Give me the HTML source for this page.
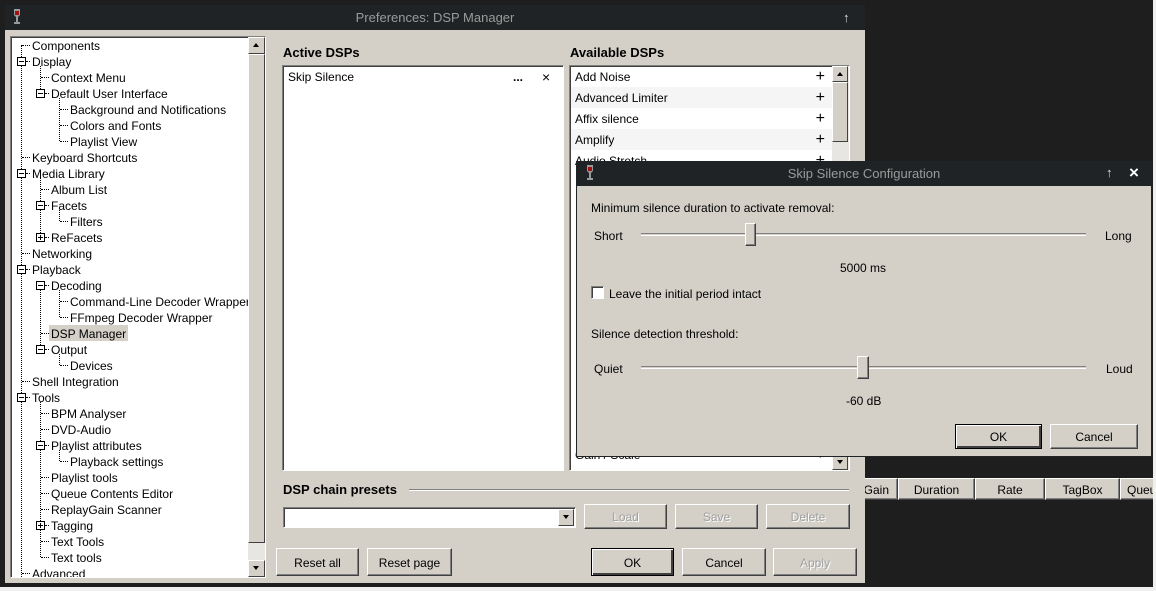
<!DOCTYPE html>
<html><head><meta charset="utf-8"><style>
*{box-sizing:border-box;margin:0;padding:0}
html,body{width:1156px;height:591px;overflow:hidden}
body{background:#1e1e1e;position:relative;font-family:"Liberation Sans","DejaVu Sans",sans-serif;font-size:12px;color:#000}
.a{position:absolute}
.t{margin-top:1px}
.win{background:#d4d0c8}
.tb{background:#202325;color:#9a9a9a;font-size:13px;text-align:center}
.btn{position:absolute;background:#d4d0c8;border:1px solid;border-color:#fff #404040 #404040 #fff;box-shadow:inset -1px -1px 0 #808080;text-align:center;font-size:12px;padding-top:1px}
.dis{color:#a0a0a0;text-shadow:1px 1px 0 #fff}
.sunk{position:absolute;background:#fff;border:1px solid;border-color:#808080 #fff #fff #808080;box-shadow:inset 1px 1px 0 #404040}
.r{position:absolute;height:16px;line-height:18px;white-space:nowrap;color:#000}
.h{position:absolute;height:1px;border-top:1px dotted #000}
.v{position:absolute;width:1px;border-left:1px dotted #000}
.ex{position:absolute;width:9px;height:9px;border:1px solid #000;background:#fff}
.ex:before{content:"";position:absolute;left:1px;top:3px;width:5px;height:1px;background:#000}
.ex.p:after{content:"";position:absolute;left:3px;top:1px;width:1px;height:5px;background:#000}
.sb{position:absolute;background:#e8e6e2}
.arr{position:absolute;width:16px;height:16px;background:#d4d0c8;border:1px solid;border-color:#fff #404040 #404040 #fff}
.up:after,.dn:after{content:"";position:absolute;left:4px;border-left:3px solid transparent;border-right:3px solid transparent}
.up:after{top:5px;border-bottom:4px solid #000}
.dn:after{top:5px;border-top:4px solid #000}
.li{position:absolute;height:21px;line-height:23px;padding-left:4px;white-space:nowrap}
.pl{position:absolute;right:8px;top:0;font-size:16px;line-height:21px}
</style></head><body>
<div class="a" style="left:865px;top:478px;width:291px;height:22px;background:#d4d0c8"></div>
<div class="btn" style="left:858px;top:478px;width:40px;height:22px;line-height:20px;text-align:right;padding-right:8px">Gain</div>
<div class="btn" style="left:898px;top:478px;width:77px;height:22px;line-height:20px">Duration</div>
<div class="btn" style="left:975px;top:478px;width:70px;height:22px;line-height:20px">Rate</div>
<div class="btn" style="left:1045px;top:478px;width:75px;height:22px;line-height:20px">TagBox</div>
<div class="btn" style="left:1120px;top:478px;width:36px;height:22px;line-height:20px;text-align:left;padding-left:6px;overflow:hidden">Queu</div>
<div class="a" style="left:0;top:587px;width:1156px;height:4px;background:#f0f0f0"></div>
<div class="a" style="left:1153px;top:0;width:3px;height:587px;background:#f0f0f0"></div>

<div class="a win" style="left:5px;top:5px;width:860px;height:578px"></div>
<div class="a tb" style="left:5px;top:5px;width:860px;height:25px;line-height:26px">Preferences: DSP Manager</div>
<div class="a" style="left:14px;top:9px;width:6px;height:16px"><svg width="6" height="16"><path d="M0 0h6v6l-2 2v5h2v2h-6v-2h2v-5l-2-2z" fill="#999"/><rect x="1" y="2" width="4" height="4" fill="#a01010"/></svg></div>
<div class="a" style="left:843px;top:10px;color:#ddd;font-size:13px;font-weight:bold">↑</div>

<div class="sunk" style="left:10px;top:36px;width:256px;height:542px"></div>
<div class="a" style="left:11px;top:37px;width:237px;height:540px;overflow:hidden">
<div class="a" style="left:-11px;top:-37px;width:260px;height:577px">
<div class="v" style="left:21px;top:45px;height:540px"></div>
<div class="v" style="left:40px;top:66px;height:27px"></div>
<div class="v" style="left:40px;top:178px;height:59px"></div>
<div class="v" style="left:40px;top:290px;height:59px"></div>
<div class="v" style="left:40px;top:402px;height:155px"></div>
<div class="v" style="left:59px;top:98px;height:43px"></div>
<div class="v" style="left:59px;top:210px;height:11px"></div>
<div class="v" style="left:59px;top:290px;height:27px"></div>
<div class="v" style="left:59px;top:354px;height:11px"></div>
<div class="v" style="left:59px;top:450px;height:11px"></div>
<div class="h" style="left:22px;top:45px;width:8px"></div><div class="r" style="left:32px;top:37px">Components</div>
<div class="ex" style="left:17px;top:57px"></div><div class="h" style="left:26px;top:61px;width:4px"></div><div class="r" style="left:32px;top:53px">Display</div>
<div class="h" style="left:41px;top:77px;width:8px"></div><div class="r" style="left:51px;top:69px">Context Menu</div>
<div class="ex" style="left:36px;top:89px"></div><div class="h" style="left:45px;top:93px;width:4px"></div><div class="r" style="left:51px;top:85px">Default User Interface</div>
<div class="h" style="left:60px;top:109px;width:8px"></div><div class="r" style="left:70px;top:101px">Background and Notifications</div>
<div class="h" style="left:60px;top:125px;width:8px"></div><div class="r" style="left:70px;top:117px">Colors and Fonts</div>
<div class="h" style="left:60px;top:141px;width:8px"></div><div class="r" style="left:70px;top:133px">Playlist View</div>
<div class="h" style="left:22px;top:157px;width:8px"></div><div class="r" style="left:32px;top:149px">Keyboard Shortcuts</div>
<div class="ex" style="left:17px;top:169px"></div><div class="h" style="left:26px;top:173px;width:4px"></div><div class="r" style="left:32px;top:165px">Media Library</div>
<div class="h" style="left:41px;top:189px;width:8px"></div><div class="r" style="left:51px;top:181px">Album List</div>
<div class="ex" style="left:36px;top:201px"></div><div class="h" style="left:45px;top:205px;width:4px"></div><div class="r" style="left:51px;top:197px">Facets</div>
<div class="h" style="left:60px;top:221px;width:8px"></div><div class="r" style="left:70px;top:213px">Filters</div>
<div class="ex p" style="left:36px;top:233px"></div><div class="h" style="left:45px;top:237px;width:4px"></div><div class="r" style="left:51px;top:229px">ReFacets</div>
<div class="h" style="left:22px;top:253px;width:8px"></div><div class="r" style="left:32px;top:245px">Networking</div>
<div class="ex" style="left:17px;top:265px"></div><div class="h" style="left:26px;top:269px;width:4px"></div><div class="r" style="left:32px;top:261px">Playback</div>
<div class="ex" style="left:36px;top:281px"></div><div class="h" style="left:45px;top:285px;width:4px"></div><div class="r" style="left:51px;top:277px">Decoding</div>
<div class="h" style="left:60px;top:301px;width:8px"></div><div class="r" style="left:70px;top:293px">Command-Line Decoder Wrapper</div>
<div class="h" style="left:60px;top:317px;width:8px"></div><div class="r" style="left:70px;top:309px">FFmpeg Decoder Wrapper</div>
<div class="h" style="left:41px;top:333px;width:8px"></div><div class="r" style="left:49px;top:325px;background:#d4d0c8;padding:0 2px">DSP Manager</div>
<div class="ex" style="left:36px;top:345px"></div><div class="h" style="left:45px;top:349px;width:4px"></div><div class="r" style="left:51px;top:341px">Output</div>
<div class="h" style="left:60px;top:365px;width:8px"></div><div class="r" style="left:70px;top:357px">Devices</div>
<div class="h" style="left:22px;top:381px;width:8px"></div><div class="r" style="left:32px;top:373px">Shell Integration</div>
<div class="ex" style="left:17px;top:393px"></div><div class="h" style="left:26px;top:397px;width:4px"></div><div class="r" style="left:32px;top:389px">Tools</div>
<div class="h" style="left:41px;top:413px;width:8px"></div><div class="r" style="left:51px;top:405px">BPM Analyser</div>
<div class="h" style="left:41px;top:429px;width:8px"></div><div class="r" style="left:51px;top:421px">DVD-Audio</div>
<div class="ex" style="left:36px;top:441px"></div><div class="h" style="left:45px;top:445px;width:4px"></div><div class="r" style="left:51px;top:437px">Playlist attributes</div>
<div class="h" style="left:60px;top:461px;width:8px"></div><div class="r" style="left:70px;top:453px">Playback settings</div>
<div class="h" style="left:41px;top:477px;width:8px"></div><div class="r" style="left:51px;top:469px">Playlist tools</div>
<div class="h" style="left:41px;top:493px;width:8px"></div><div class="r" style="left:51px;top:485px">Queue Contents Editor</div>
<div class="h" style="left:41px;top:509px;width:8px"></div><div class="r" style="left:51px;top:501px">ReplayGain Scanner</div>
<div class="ex p" style="left:36px;top:521px"></div><div class="h" style="left:45px;top:525px;width:4px"></div><div class="r" style="left:51px;top:517px">Tagging</div>
<div class="h" style="left:41px;top:541px;width:8px"></div><div class="r" style="left:51px;top:533px">Text Tools</div>
<div class="h" style="left:41px;top:557px;width:8px"></div><div class="r" style="left:51px;top:549px">Text tools</div>
<div class="h" style="left:22px;top:573px;width:8px"></div><div class="r" style="left:32px;top:565px">Advanced</div>
</div></div>
<div class="sb" style="left:248px;top:37px;width:17px;height:540px"></div>
<div class="arr up" style="left:248px;top:37px;width:17px;height:17px"></div>
<div class="arr" style="left:248px;top:54px;width:17px;height:489px"></div>
<div class="arr dn" style="left:248px;top:560px;width:17px;height:17px"></div>

<div class="a" style="left:283px;top:45px;font-weight:bold;font-size:13px">Active DSPs</div>
<div class="a" style="left:570px;top:45px;font-weight:bold;font-size:13px">Available DSPs</div>
<div class="sunk" style="left:282px;top:65px;width:282px;height:406px"></div>
<div class="li" style="left:284px;top:66px;width:278px">Skip Silence<span style="position:absolute;left:229px;font-weight:bold">...</span><span style="position:absolute;left:258px;font-size:14px">×</span></div>
<div class="sunk" style="left:569px;top:65px;width:281px;height:406px;overflow:hidden">
<div class="li" style="left:1px;top:0;width:262px">Add Noise<span class="pl">+</span></div>
<div class="li" style="left:1px;top:21px;width:262px;background:#f5f5f5">Advanced Limiter<span class="pl">+</span></div>
<div class="li" style="left:1px;top:42px;width:262px">Affix silence<span class="pl">+</span></div>
<div class="li" style="left:1px;top:63px;width:262px;background:#f5f5f5">Amplify<span class="pl">+</span></div>
<div class="li" style="left:1px;top:84px;width:262px">Audio Stretch<span class="pl">+</span></div>
<div class="li" style="left:1px;top:378px;width:262px">Gain / Scale<span class="pl">+</span></div>
</div>
<div class="sb" style="left:832px;top:66px;width:17px;height:404px"></div>
<div class="arr up" style="left:832px;top:66px"></div>
<div class="arr" style="left:832px;top:82px;height:60px"></div>
<div class="arr dn" style="left:832px;top:454px"></div>

<div class="a" style="left:283px;top:482px;font-weight:bold;font-size:13px">DSP chain presets</div>
<div class="a" style="left:409px;top:489px;width:440px;height:2px;border-top:1px solid #808080;border-bottom:1px solid #fff"></div>
<div class="sunk" style="left:283px;top:507px;width:293px;height:21px"></div>
<div class="arr dn" style="left:558px;top:509px;height:17px"></div>
<div class="btn dis" style="left:584px;top:504px;width:83px;height:25px;line-height:23px">Load</div>
<div class="btn dis" style="left:675px;top:504px;width:83px;height:25px;line-height:23px">Save</div>
<div class="btn dis" style="left:766px;top:504px;width:84px;height:25px;line-height:23px">Delete</div>
<div class="btn" style="left:276px;top:548px;width:83px;height:28px;line-height:26px">Reset all</div>
<div class="btn" style="left:367px;top:548px;width:85px;height:28px;line-height:26px">Reset page</div>
<div class="btn" style="left:591px;top:548px;width:83px;height:28px;line-height:26px;border:1px solid #000;box-shadow:inset 1px 1px 0 #fff,inset -2px -2px 0 #404040">OK</div>
<div class="btn" style="left:682px;top:548px;width:84px;height:28px;line-height:26px">Cancel</div>
<div class="btn dis" style="left:773px;top:548px;width:84px;height:28px;line-height:26px">Apply</div>

<div class="a win" style="left:576px;top:161px;width:576px;height:296px;border:1px solid #202325"></div>
<div class="a tb" style="left:576px;top:161px;width:576px;height:25px;line-height:26px">Skip Silence Configuration</div>
<div class="a" style="left:587px;top:165px;width:6px;height:16px"><svg width="6" height="16"><path d="M0 0h6v6l-2 2v5h2v2h-6v-2h2v-5l-2-2z" fill="#999"/><rect x="1" y="2" width="4" height="4" fill="#a01010"/></svg></div>
<div class="a" style="left:1106px;top:165px;color:#ddd;font-size:13px;font-weight:bold">↑</div>
<div class="a" style="left:1129px;top:163px;color:#fff;font-size:17px;font-weight:bold">×</div>
<div class="a" style="left:591px;top:201px">Minimum silence duration to activate removal:</div>
<div class="a" style="left:594px;top:229px">Short</div>
<div class="a" style="left:1105px;top:229px">Long</div>
<div class="a" style="left:641px;top:233px;width:445px;height:3px;border-top:1px solid #808080;border-bottom:1px solid #fff;background:#d4d0c8"></div>
<div class="btn" style="left:745px;top:223px;width:11px;height:23px"></div>
<div class="a" style="left:840px;top:261px">5000 ms</div>
<div class="a" style="left:591px;top:286px;width:13px;height:13px;background:#fff;border:1px solid;border-color:#808080 #fff #fff #808080;box-shadow:inset 1px 1px 0 #404040"></div>
<div class="a" style="left:609px;top:287px">Leave the initial period intact</div>
<div class="a" style="left:591px;top:327px">Silence detection threshold:</div>
<div class="a" style="left:594px;top:362px">Quiet</div>
<div class="a" style="left:1106px;top:362px">Loud</div>
<div class="a" style="left:641px;top:366px;width:445px;height:3px;border-top:1px solid #808080;border-bottom:1px solid #fff;background:#d4d0c8"></div>
<div class="btn" style="left:857px;top:356px;width:12px;height:23px"></div>
<div class="a" style="left:846px;top:394px">-60 dB</div>
<div class="btn" style="left:955px;top:424px;width:87px;height:25px;line-height:23px;border:1px solid #000;box-shadow:inset 1px 1px 0 #fff,inset -2px -2px 0 #404040">OK</div>
<div class="btn" style="left:1050px;top:424px;width:88px;height:25px;line-height:23px">Cancel</div>
</body></html>
